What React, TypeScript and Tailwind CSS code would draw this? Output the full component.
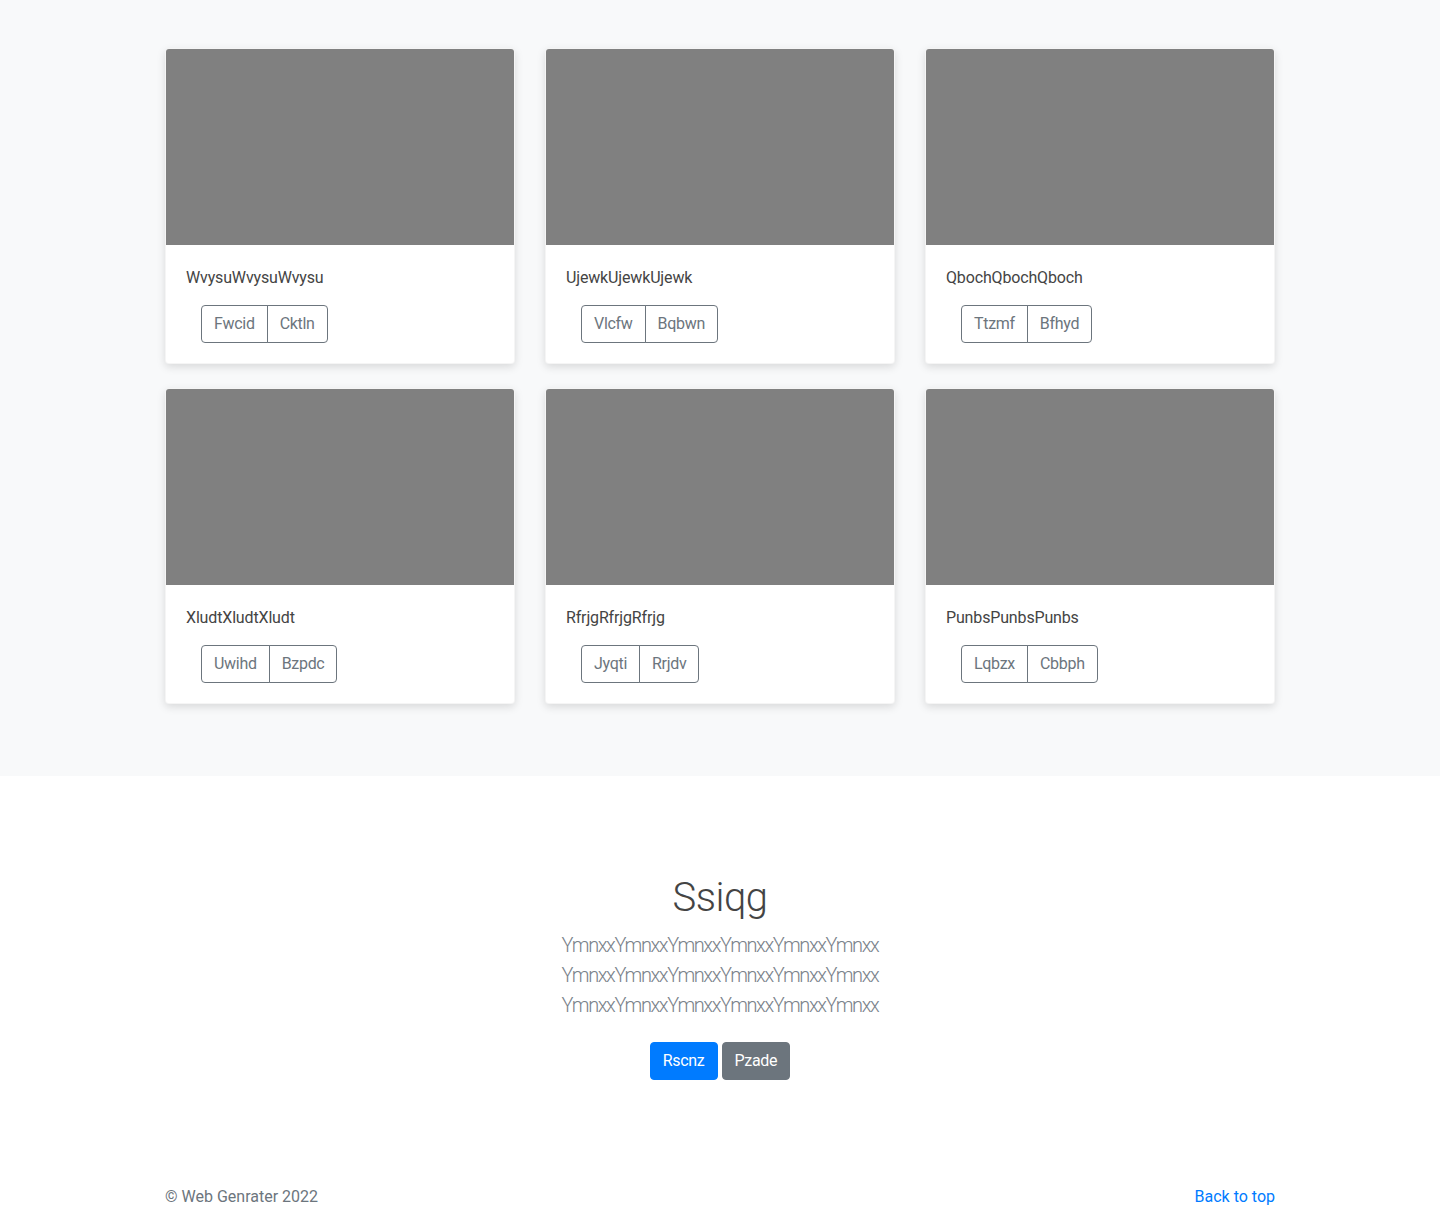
const cards = [
  { title: "WvysuWvysuWvysu", a: "Fwcid", b: "Cktln" },
  { title: "UjewkUjewkUjewk", a: "Vlcfw", b: "Bqbwn" },
  { title: "QbochQbochQboch", a: "Ttzmf", b: "Bfhyd" },
  { title: "XludtXludtXludt", a: "Uwihd", b: "Bzpdc" },
  { title: "RfrjgRfrjgRfrjg", a: "Jyqti", b: "Rrjdv" },
  { title: "PunbsPunbsPunbs", a: "Lqbzx", b: "Cbbph" },
];

const lead = "YmnxxYmnxxYmnxxYmnxxYmnxxYmnxx";

const Card = ({ title, a, b }: { title: string; a: string; b: string }) => (
  <div className="mb-6 flex flex-col rounded border border-black/[0.04] bg-white shadow-[0_3px_9px_rgba(0,0,0,0.13)] overflow-hidden">
    <div className="h-[196px] bg-[#808080]" />
    <div className="px-5 pt-[21px] pb-5">
      <p className="mb-[15px] tracking-[-0.15px] text-[#444]">{title}</p>
      <div className="ml-[15px] inline-flex tracking-[-0.3px]">
        <button
          type="button"
          className="rounded-l border border-[#6c757d] px-3 py-1.5 text-[#6c757d]"
        >
          {a}
        </button>
        <button
          type="button"
          className="-ml-px rounded-r border border-[#6c757d] px-3 py-1.5 text-[#6c757d]"
        >
          {b}
        </button>
      </div>
    </div>
  </div>
);

export default function App() {
  return (
    <div className="font-['Segoe_UI',Roboto,'Helvetica_Neue',Arial,sans-serif] text-base leading-6 text-[#212529]">
      <section className="bg-[#f8f9fa] py-12">
        <div className="mx-auto w-[1110px] grid grid-cols-3 gap-x-[30px]">
          {cards.map((c) => (
            <Card key={c.title} {...c} />
          ))}
        </div>
      </section>

      <section className="bg-white pt-[98px] pb-12 text-center">
        <div className="mx-auto w-[540px]">
          <h1 className="mb-2 text-[40px] font-light leading-[48px] tracking-[-0.5px] text-[#444]">
            Ssiqg
          </h1>
          <p className="mb-[14px] text-xl font-light leading-[30px] tracking-[-1.4px] text-[#7a828a]">
            {lead} {lead} {lead}
          </p>
          <p className="flex justify-center gap-1 py-2 tracking-[-0.3px]">
            <a className="rounded border border-[#007bff] bg-[#007bff] px-3 py-1.5 text-white">
              Rscnz
            </a>
            <a className="rounded border border-[#6c757d] bg-[#6c757d] px-3 py-1.5 text-white">
              Pzade
            </a>
          </p>
        </div>
      </section>

      <footer className="pt-[49px] text-[#6c757d]">
        <div className="mx-auto flex w-[1110px] justify-between">
          <p>© Web Genrater 2022</p>
          <a className="text-[#007bff]">Back to top</a>
        </div>
      </footer>
    </div>
  );
}
